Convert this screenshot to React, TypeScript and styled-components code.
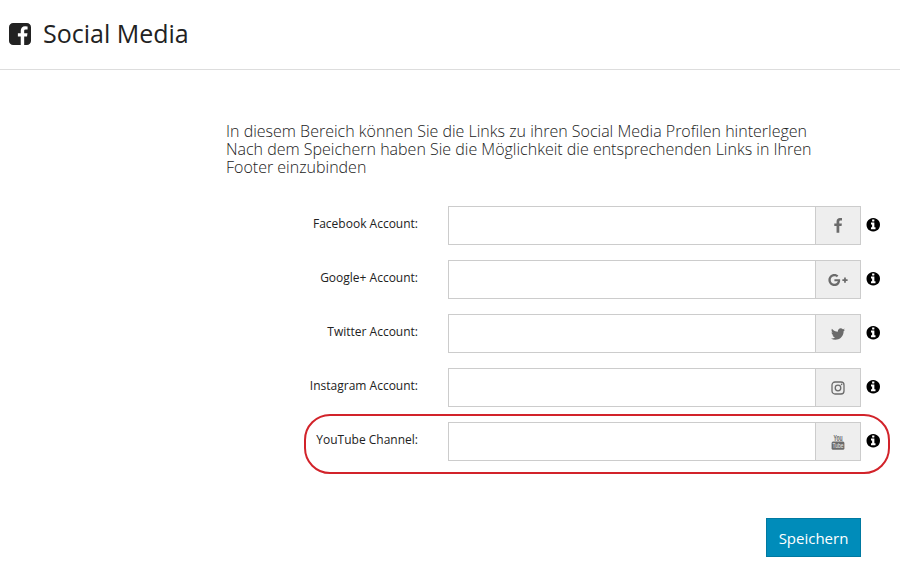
import React from "react";
import styled, { createGlobalStyle } from "styled-components";
import { FaGooglePlusG } from "react-icons/fa";

const GlobalStyle = createGlobalStyle`
  * { box-sizing: border-box; }
  body { margin: 0; background: #fff; color: #222; font-family: "Open Sans", sans-serif; }
`;

const Page = styled.main`
  width: 900px;
  height: 571px;
  overflow: hidden;
`;

const Header = styled.header`
  display: flex;
  align-items: center;
  gap: 12px;
  height: 70px;
  padding: 0 0 1px 9px;
  border-bottom: 1px solid #ddd;
`;

const Title = styled.h1`
  margin: 0;
  padding-bottom: 2px;
  font-size: 25px;
  font-weight: 400;
  line-height: 34px;
`;

const Form = styled.form`
  display: flex;
  flex-direction: column;
  padding-top: 52px;
`;

const Intro = styled.p`
  margin: 0 0 30px 226px;
  font-size: 16px;
  font-weight: 300;
  line-height: 18px;
  white-space: nowrap;
`;

const Row = styled.div`
  position: relative;
  display: grid;
  grid-template-columns: 418px 413px 14px;
  column-gap: 30px;
  height: 39px;
  margin-bottom: 15px;
`;

const Label = styled.label`
  padding-top: 9px;
  font-size: 12px;
  line-height: 18px;
  text-align: right;
`;

const InputGroup = styled.div`
  display: flex;
  border: 1px solid #ccc;
`;

const Input = styled.input`
  flex: 1;
  min-width: 0;
  border: 0;
  outline: 0;
  padding: 0 12px;
  font: 14px "Open Sans", sans-serif;
`;

const Addon = styled.span`
  display: flex;
  align-items: center;
  justify-content: center;
  width: 45px;
  border-left: 1px solid #ccc;
  background: #eee;
  color: #6b6b6b;
`;

const Info = styled.span`
  display: flex;
  margin: 12px 0 0 -25px;
  height: 14px;
  color: #000;
`;

const Highlight = styled.div`
  position: absolute;
  left: 304px;
  top: -8px;
  width: 586px;
  height: 60px;
  border: 2px solid #d2232a;
  border-radius: 26px;
  pointer-events: none;
`;

const SaveButton = styled.button`
  align-self: flex-start;
  width: 95px;
  height: 39px;
  margin: 42px 0 0 766px;
  padding: 0;
  border: 1px solid #0079a1;
  background: #008cba;
  color: #fff;
  font: 15px "Open Sans", sans-serif;
`;

const FacebookSquare = () => (
  <svg width="22" height="22" viewBox="128 128 1536 1536" fill="currentColor">
    <path d="M1376 128q119 0 203.500 84.500t84.500 203.500v960q0 119-84.500 203.500t-203.500 84.500h-188v-595h199l30-232h-229v-148q0-56 23.500-84t91.500-28l122-1v-207q-63-9-178-9-136 0-217.500 80t-81.500 226v171h-200v232h200v595h-532q-119 0-203.500-84.500t-84.500-203.500v-960q0-119 84.500-203.500t203.500-84.500h960z" />
  </svg>
);

const FacebookIcon = () => (
  <svg width="16" height="16" viewBox="0 0 1792 1792" fill="currentColor">
    <path d="M1343 12v264h-157q-86 0-116 36t-30 108v189h293l-39 296h-254v759h-306v-759h-255v-296h255v-218q0-186 104-288.500t277-102.500q147 0 228 12z" />
  </svg>
);

const TwitterIcon = () => (
  <svg width="16" height="16" viewBox="0 0 1792 1792" fill="currentColor">
    <path d="M1684 408q-67 98-162 167 1 14 1 42 0 130-38 259.500t-115.500 248.500-184.500 210.500-258 146-323 54.500q-271 0-496-145 35 4 78 4 225 0 401-138-105-2-188-64.500t-114-159.500q33 5 61 5 43 0 85-11-112-23-185.500-111.500t-73.500-205.500v-4q68 38 146 41-66-44-105-115t-39-154q0-88 44-163 121 149 294.500 238.500t371.500 99.500q-8-38-8-74 0-134 94.500-228.500t228.500-94.500q140 0 236 102 109-21 205-78-37 115-142 178 93-10 186-50z" />
  </svg>
);

const InstagramIcon = () => (
  <svg width="14" height="14" viewBox="0 0 14 14" fill="none" stroke="currentColor" strokeWidth="1.3">
    <rect x="1" y="1" width="12" height="12" rx="3" />
    <circle cx="7" cy="7" r="2.8" />
    <circle cx="10.6" cy="3.4" r="0.8" fill="currentColor" stroke="none" />
  </svg>
);

const YouTubeIcon = () => (
  <svg width="14" height="16" viewBox="0 0 14 16" fill="currentColor">
    <g fontFamily="Liberation Sans" fontWeight="700">
      <text x="2.4" y="6.6" fontSize="8.4" textLength="9.2" lengthAdjust="spacingAndGlyphs">You</text>
      <rect x="0.6" y="7.5" width="12.8" height="8.2" rx="1.5" />
      <text x="1.6" y="14.4" fontSize="7.4" fontWeight="400" fill="#eee" textLength="10.8" lengthAdjust="spacingAndGlyphs">Tube</text>
    </g>
  </svg>
);

const InfoIcon = () => (
  <svg width="14" height="14" viewBox="72 128 1592 1592" fill="currentColor">
    <path d="M1152 1376v-160q0-14-9-23t-23-9h-96v-512q0-14-9-23t-23-9h-320q-14 0-23 9t-9 23v160q0 14 9 23t23 9h96v320h-96q-14 0-23 9t-9 23v160q0 14 9 23t23 9h448q14 0 23-9t9-23zm-128-896v-160q0-14-9-23t-23-9h-192q-14 0-23 9t-9 23v160q0 14 9 23t23 9h192q14 0 23-9t9-23zm640 416q0 209-103 385.500t-279.500 279.500-385.500 103-385.500-103-279.500-279.500-103-385.500 103-385.500 279.500-279.500 385.500-103 385.500 103 279.500 279.500 103 385.500z" />
  </svg>
);

const accounts = [
  { id: "facebook", label: "Facebook Account:", icon: <FacebookIcon /> },
  { id: "google", label: "Google+ Account:", icon: <FaGooglePlusG size={20} /> },
  { id: "twitter", label: "Twitter Account:", icon: <TwitterIcon /> },
  { id: "instagram", label: "Instagram Account:", icon: <InstagramIcon /> },
  { id: "youtube", label: "YouTube Channel:", icon: <YouTubeIcon />, highlighted: true },
];

export default function App() {
  return (
    <Page>
      <GlobalStyle />
      <Header>
        <FacebookSquare />
        <Title>Social Media</Title>
      </Header>
      <Form>
        <Intro>
          In diesem Bereich können Sie die Links zu ihren Social Media Profilen hinterlegen
          <br />
          Nach dem Speichern haben Sie die Möglichkeit die entsprechenden Links in Ihren
          <br />
          Footer einzubinden
        </Intro>
        {accounts.map((account) => (
          <Row key={account.id}>
            <Label htmlFor={account.id}>{account.label}</Label>
            <InputGroup>
              <Input id={account.id} />
              <Addon>{account.icon}</Addon>
            </InputGroup>
            <Info>
              <InfoIcon />
            </Info>
            {account.highlighted && <Highlight />}
          </Row>
        ))}
        <SaveButton type="button">Speichern</SaveButton>
      </Form>
    </Page>
  );
}
